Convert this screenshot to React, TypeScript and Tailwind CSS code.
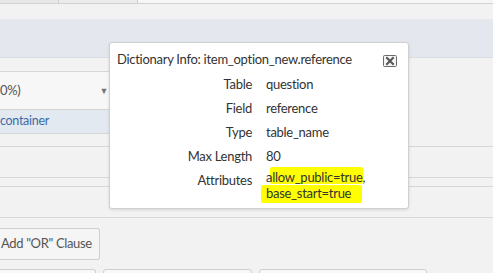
import React from "react";

function CloseIcon() {
  return (
    <svg width="14" height="12" viewBox="0 0 14 12" className="block">
      <rect x="0.5" y="0.5" width="13" height="11" rx="1" fill="#f4f4f4" stroke="#6b6b6b" />
      <path d="M4 3 L10 9 M10 3 L4 9" stroke="#555" strokeWidth="2" strokeLinecap="square" />
    </svg>
  );
}

const rows: [string, string][] = [
  ["Table", "question"],
  ["Field", "reference"],
  ["Type", "table_name"],
  ["Max Length", "80"],
];

export default function App() {
  return (
    <div className="relative w-[493px] h-[273px] overflow-hidden bg-[#f2f2f2] font-['Lato',sans-serif] text-[13px] tracking-[-0.28px] text-[#333]">
      {/* tab strip */}
      <div className="flex h-[4px] border-b border-[#d2d2d2]">
        <div className="w-[59px] bg-[#e7e7e7] border-r border-[#cfcfcf]" />
        <div className="w-[79px] bg-[#ebebeb] border-r border-[#cfcfcf]" />
        <div className="flex-1 bg-[#f6f6f6]" />
      </div>
      <div className="h-[15px]" />
      <div className="h-[39px] bg-[#e4e8ee] border-b border-[#dadee4]" />
      <div className="h-[13px]" />
      {/* left form */}
      <div className="w-[114px]">
        <div className="h-[39px] flex items-center justify-between border-t border-b border-[#d6d6d6] bg-[#f7f7f7] pr-[6px] text-[13px] tracking-[-0.3px] text-[#555]">
          <span>0%)</span>
          <span className="text-[9px] text-[#777]">▼</span>
        </div>
        <div className="h-[24px] flex items-center bg-[#e3e9f1] border-b border-[#d6d6d6] text-[12.5px] tracking-[-0.3px] text-[#3d6aa6]">
          <span>container</span>
        </div>
      </div>
      <div className="h-[13px] border-b border-[#d6d6d6]" />
      <div className="h-[31px] border-b border-[#d6d6d6]" />
      <div className="h-[9px] border-b border-[#d6d6d6]" />
      <div className="h-[31px] border-b border-[#d6d6d6]" />
      <div className="h-[10px]" />
      <div className="flex">
        <button className="h-[32px] w-[100px] flex items-center justify-start pl-[1px] whitespace-nowrap rounded-r-[3px] border border-l-0 border-[#cfcfcf] bg-[#f5f5f5] text-[13px] tracking-[-0.35px] text-[#555]">
          Add "OR" Clause
        </button>
      </div>
      <div className="h-[9px]" />
      <div className="flex gap-[7px]">
        <div className="w-[96px] h-[20px] rounded-r-[3px] border border-l-0 border-[#cfcfcf] bg-[#f8f8f8]" />
        <div className="w-[149px] h-[20px] rounded-[3px] border border-[#cfcfcf] bg-[#f8f8f8]" />
        <div className="w-[168px] h-[20px] rounded-[3px] border border-[#cfcfcf] bg-[#f8f8f8]" />
      </div>

      {/* popup */}
      <div className="absolute left-[109px] top-[42px] w-[300px] h-[167px] bg-white border border-[#d0d0d0] rounded-[3px] shadow-[0_1px_3px_rgba(0,0,0,0.12)]">
        <div className="flex items-center justify-between pl-[7px] pr-[11px] pt-[6px] h-[26px]">
          <span className="leading-[20px]">Dictionary Info: item_option_new.reference</span>
          <span className="mt-[3px]"><CloseIcon /></span>
        </div>
        <div className="mt-[3px] grid grid-cols-[142px_1fr] gap-x-[14px]">
          {rows.map(([k, v]) => (
            <React.Fragment key={k}>
              <div className="text-right leading-[16px] py-[4px]">{k}</div>
              <div className="leading-[16px] py-[4px]">{v}</div>
            </React.Fragment>
          ))}
          <div className="text-right leading-[16px] pt-[4px]">Attributes</div>
          <div className="relative leading-[16px] pt-[1px]">
            <div className="absolute left-[4px] top-[-1px] w-[93px] h-[17px] bg-[#ffff00] rounded-[2px]" />
            <div className="absolute left-[-5px] top-[17px] w-[101px] h-[18px] bg-[#ffff00] rounded-[2px]" />
            <div className="relative">
              allow_public=true,
              <br />
              base_start=true
            </div>
          </div>
        </div>
      </div>
    </div>
  );
}
